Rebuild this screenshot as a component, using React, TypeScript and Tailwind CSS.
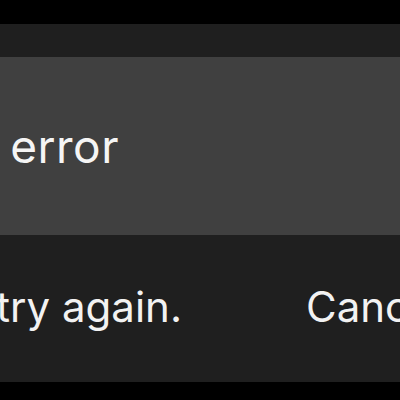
import React from "react";

export default function App() {
  return (
    <div
      className="w-[400px] h-[400px] bg-black overflow-hidden pt-[24px]"
      style={{ fontFamily: "Inter, 'Noto Sans', sans-serif" }}
    >
      <div className="h-[358px] bg-[#1f1f1f] pt-[33px] flex flex-col">
        <div className="h-[178px] bg-[#404040] flex items-center">
          <div className="w-[119px] shrink-0 flex justify-end whitespace-nowrap text-[46px] leading-none tracking-[0.5px] text-[#f5f5f5]">
            Some error
          </div>
        </div>
        <div className="flex items-start pt-[51px] whitespace-nowrap text-[42px] leading-none text-[#f2f2f2]">
          <div className="w-[182px] shrink-0 flex justify-end">Please try again.</div>
          <div className="pl-[124px]">Cancel</div>
        </div>
      </div>
    </div>
  );
}
